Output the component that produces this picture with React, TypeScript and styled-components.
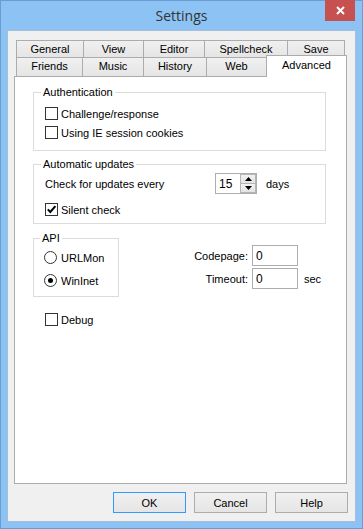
import React from 'react';
import styled, { createGlobalStyle } from 'styled-components';

const GlobalStyle = createGlobalStyle`
  html, body {
    margin: 0;
    padding: 0;
    background: #fff;
  }
  body {
    font-family: "Liberation Sans", Arial, sans-serif;
    font-size: 11px;
    color: #000;
  }
`;

const Window = styled.div`
  width: 363px;
  height: 529px;
  box-sizing: border-box;
  border: 1px solid #6a9ed3;
  background: #8cc3f4;
  display: flex;
  flex-direction: column;
`;

const TitleBar = styled.div`
  height: 29px;
  flex: none;
  display: grid;
  grid-template-columns: 1fr auto 1fr;
  padding: 0 7px;
`;

const Title = styled.div`
  grid-column: 2;
  align-self: center;
  font-family: "Open Sans", "Noto Sans", sans-serif;
  font-size: 14px;
  color: #333;
`;

const CloseButton = styled.div`
  grid-column: 3;
  justify-self: end;
  align-self: start;
  margin-top: -1px;
  width: 30px;
  height: 21px;
  background: #c75050;
  display: flex;
  align-items: center;
  justify-content: center;
`;

const Client = styled.div`
  flex: 1;
  margin: 0 6px 6px;
  border: 1px solid #a6bfd8;
  background: #f0f0f0;
  display: flex;
  flex-direction: column;
  padding: 9px 7px 8px 6px;
`;

const TabStrip = styled.div`
  display: flex;
  flex-direction: column;
  padding-left: 2px;
  margin-right: 1px;
`;

const TabRow = styled.div<{ $h: number }>`
  display: flex;
  align-items: flex-start;
  height: ${p => p.$h}px;
`;

const Tab = styled.div<{ $w: number; $h: number; $active?: boolean }>`
  box-sizing: border-box;
  width: ${p => p.$w}px;
  height: ${p => (p.$active ? p.$h + 3 : p.$h)}px;
  margin-left: -1px;
  margin-top: ${p => (p.$active ? -2 : 0)}px;
  border: 1px solid #acacac;
  border-bottom: none;
  background: ${p => (p.$active ? '#fff' : 'linear-gradient(#f0f0f0, #e5e5e5)')};
  text-align: center;
  padding-top: ${p => (p.$active ? 2 : 1)}px;
  line-height: 14px;
  position: relative;
  z-index: ${p => (p.$active ? 2 : 0)};
  &:first-child {
    margin-left: 0;
  }
`;

const Panel = styled.div`
  flex: 1;
  margin-right: 1px;
  border: 1px solid #acacac;
  background: #fff;
  display: flex;
  flex-direction: column;
  align-items: flex-start;
`;

const Group = styled.fieldset<{ $w?: number }>`
  margin: 0;
  min-width: 0;
  box-sizing: border-box;
  border: 1px solid #dcdcdc;
  padding: 0 0 0 11px;
  ${p => (p.$w ? `width: ${p.$w}px;` : '')}
`;

const WideGroup = styled(Group)`
  align-self: stretch;
  margin: 0 20px 0 18px;
`;

const AuthGroup = styled(WideGroup)`
  margin-top: 9px;
  padding-top: 5px;
  padding-bottom: 8px;
`;

const UpdateGroup = styled(WideGroup)`
  margin-top: 7px;
  padding-top: 1px;
  padding-bottom: 4px;
`;

const ApiGroup = styled(Group)`
  padding: 3px 0 6px 10px;
`;

const Legend = styled.legend`
  padding: 0 2px;
  margin-left: -4px;
  line-height: 13px;
`;

const OptionRow = styled.div<{ $gap?: number }>`
  height: 19px;
  display: flex;
  align-items: center;
  gap: ${p => p.$gap ?? 3}px;
  margin-top: ${p => (p.$gap ? 0 : 0)}px;
`;

const SpacedRow = styled(OptionRow)<{ $top: number }>`
  margin-top: ${p => p.$top}px;
`;

const Box = styled.span`
  width: 13px;
  height: 13px;
  box-sizing: border-box;
  border: 1px solid #333;
  background: #fff;
  display: flex;
  align-items: center;
  justify-content: center;
  flex: none;
`;

const RadioCircle = styled(Box)`
  border-radius: 50%;
`;

const RadioDot = styled.span`
  width: 5px;
  height: 5px;
  border-radius: 50%;
  background: #000;
`;

const SpinRow = styled.div`
  height: 23px;
  display: flex;
  align-items: center;
`;

const SpinLabel = styled.span`
  width: 170px;
`;

const SpinBox = styled.div`
  width: 42px;
  height: 21px;
  box-sizing: border-box;
  border: 1px solid #abadb3;
  background: #fff;
  display: flex;
  align-items: center;
  margin-right: 9px;
`;

const SpinValue = styled.span`
  flex: 1;
  padding-left: 3px;
  font-size: 12px;
`;

const SpinButtons = styled.div`
  width: 16px;
  height: 19px;
  display: flex;
  flex-direction: column;
`;

const SpinBtn = styled.div`
  flex: 1;
  box-sizing: border-box;
  border: 1px solid #b5b5b5;
  background: linear-gradient(#f2f2f2, #e3e3e3);
  display: flex;
  align-items: center;
  justify-content: center;
  & + & {
    border-top: none;
  }
`;

const LowerRow = styled.div`
  display: flex;
  align-items: flex-start;
  margin: 8px 0 0 18px;
`;

const FieldGrid = styled.div`
  display: grid;
  grid-template-columns: 133px 46px auto;
  grid-auto-rows: 21px;
  row-gap: 2px;
  align-items: center;
  margin-top: 13px;
`;

const FieldLabel = styled.span`
  text-align: right;
  padding-right: 4px;
`;

const TextBox = styled.input`
  box-sizing: border-box;
  width: 46px;
  height: 21px;
  margin: 0;
  border: 1px solid #abadb3;
  padding: 0 3px;
  font-family: inherit;
  font-size: 12px;
  color: #000;
  background: #fff;
  outline: none;
`;

const Unit = styled.span`
  padding-left: 6px;
`;

const DebugRow = styled(OptionRow)`
  margin: 13px 0 0 30px;
`;

const ButtonBar = styled.div`
  display: flex;
  justify-content: flex-end;
  gap: 8px;
  margin-top: 8px;
`;

const Button = styled.div<{ $default?: boolean }>`
  width: 73px;
  height: 21px;
  box-sizing: border-box;
  border: 1px solid ${p => (p.$default ? '#3399ff' : '#acacac')};
  background: linear-gradient(#f0f0f0, #e5e5e5);
  display: flex;
  align-items: center;
  justify-content: center;
`;

const CheckBox = ({ checked }: { checked?: boolean }) => (
  <Box>
    {checked && (
      <svg width="11" height="11" viewBox="0 0 11 11">
        <path d="M1.8 5.4 L4.3 8 L9.4 2.2" fill="none" stroke="#000" strokeWidth="2" />
      </svg>
    )}
  </Box>
);

const Radio = ({ checked }: { checked?: boolean }) => (
  <RadioCircle>{checked && <RadioDot />}</RadioCircle>
);

const Arrow = ({ up }: { up?: boolean }) => (
  <svg width="7" height="4" viewBox="0 0 7 4">
    <polygon points={up ? '0,4 7,4 3.5,0' : '0,0 7,0 3.5,4'} fill="#000" />
  </svg>
);

const topTabs = [
  { label: 'General', w: 68 },
  { label: 'View', w: 61 },
  { label: 'Editor', w: 62 },
  { label: 'Spellcheck', w: 84 },
  { label: 'Save', w: 58 },
];

const bottomTabs = [
  { label: 'Friends', w: 67 },
  { label: 'Music', w: 62 },
  { label: 'History', w: 64 },
  { label: 'Web', w: 61 },
  { label: 'Advanced', w: 81, active: true },
];

const App = () => {
  return (
    <Window>
      <GlobalStyle />
      <TitleBar>
        <Title>Settings</Title>
        <CloseButton>
          <svg width="9" height="9" viewBox="0 0 9 9">
            <path d="M1 1 L8 8 M8 1 L1 8" stroke="#fff" strokeWidth="2" />
          </svg>
        </CloseButton>
      </TitleBar>
      <Client>
        <TabStrip>
          <TabRow $h={17}>
            {topTabs.map(t => (
              <Tab key={t.label} $w={t.w} $h={17}>{t.label}</Tab>
            ))}
          </TabRow>
          <TabRow $h={19}>
            {bottomTabs.map(t => (
              <Tab key={t.label} $w={t.w} $h={19} $active={t.active}>{t.label}</Tab>
            ))}
          </TabRow>
        </TabStrip>
        <Panel>
          <AuthGroup>
            <Legend>Authentication</Legend>
            <OptionRow><CheckBox />Challenge/response</OptionRow>
            <OptionRow><CheckBox />Using IE session cookies</OptionRow>
          </AuthGroup>
          <UpdateGroup>
            <Legend>Automatic updates</Legend>
            <SpinRow>
              <SpinLabel>Check for updates every</SpinLabel>
              <SpinBox>
                <SpinValue>15</SpinValue>
                <SpinButtons>
                  <SpinBtn><Arrow up /></SpinBtn>
                  <SpinBtn><Arrow /></SpinBtn>
                </SpinButtons>
              </SpinBox>
              <span>days</span>
            </SpinRow>
            <SpacedRow $top={5}><CheckBox checked />Silent check</SpacedRow>
          </UpdateGroup>
          <LowerRow>
            <ApiGroup $w={86}>
              <Legend>API</Legend>
              <OptionRow $gap={4}><Radio />URLMon</OptionRow>
              <SpacedRow $top={4} $gap={4}><Radio checked />WinInet</SpacedRow>
            </ApiGroup>
            <FieldGrid>
              <FieldLabel>Codepage:</FieldLabel>
              <TextBox readOnly value="0" />
              <span />
              <FieldLabel>Timeout:</FieldLabel>
              <TextBox readOnly value="0" />
              <Unit>sec</Unit>
            </FieldGrid>
          </LowerRow>
          <DebugRow><CheckBox />Debug</DebugRow>
        </Panel>
        <ButtonBar>
          <Button $default>OK</Button>
          <Button>Cancel</Button>
          <Button>Help</Button>
        </ButtonBar>
      </Client>
    </Window>
  );
};

export default App;
